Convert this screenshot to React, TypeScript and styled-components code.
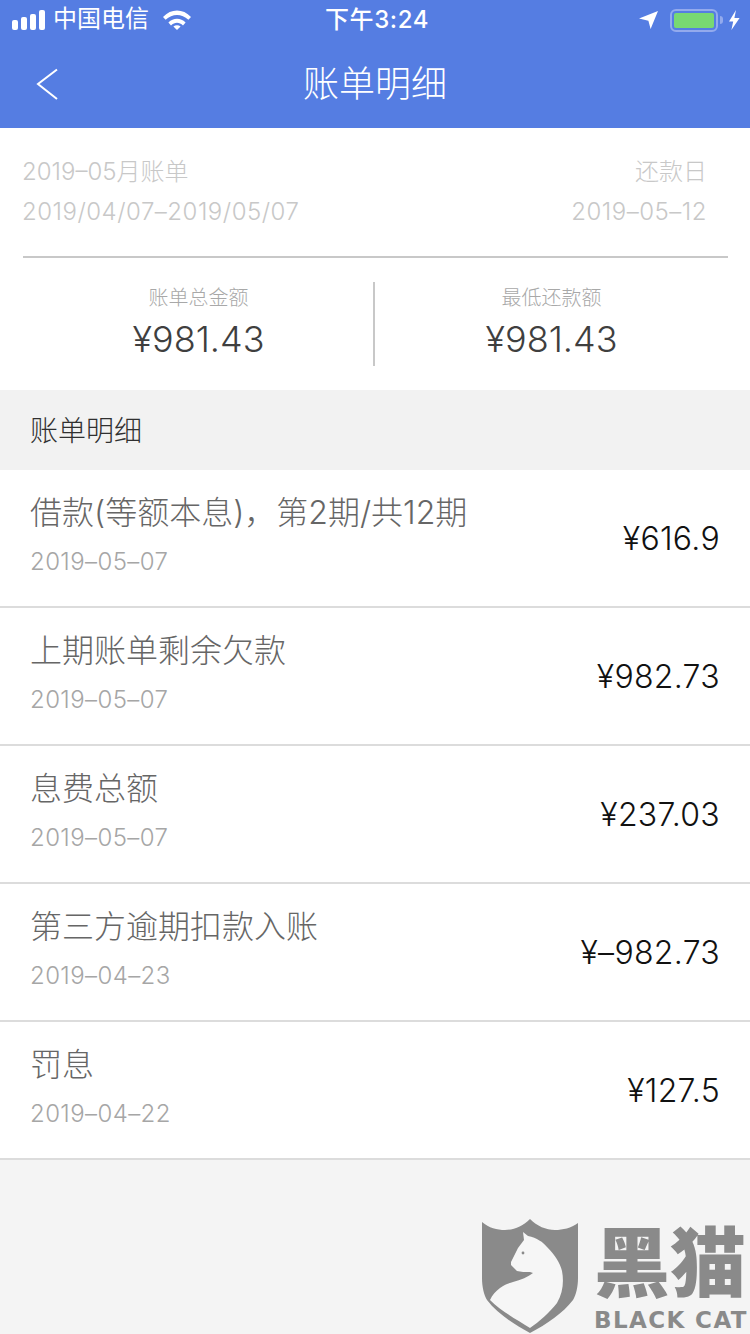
import styled, { createGlobalStyle } from "styled-components";

const GlobalStyle = createGlobalStyle`
  html, body {
    margin: 0;
    padding: 0;
    background: #f4f4f4;
  }
  * {
    box-sizing: border-box;
  }
`;

const fontStack = `Inter, "Noto Sans CJK SC", sans-serif`;

const bills = [
  { title: "借款(等额本息)，第2期/共12期", date: "2019–05–07", amount: "¥616.9" },
  { title: "上期账单剩余欠款", date: "2019–05–07", amount: "¥982.73" },
  { title: "息费总额", date: "2019–05–07", amount: "¥237.03" },
  { title: "第三方逾期扣款入账", date: "2019–04–23", amount: "¥–982.73" },
  { title: "罚息", date: "2019–04–22", amount: "¥127.5" },
];

const App = () => {
  return (
    <>
      <GlobalStyle />
      <Page>
        <Header>
          <StatusBar>
            <StatusLeft>
              <Signal>
                <SignalBar $height={10} />
                <SignalBar $height={13} />
                <SignalBar $height={16} />
                <SignalBar $height={20} />
              </Signal>
              <Carrier>中国电信</Carrier>
              <svg width="28" height="20" viewBox="0 0 28 20">
                <path d="M0 7C8 -1.6 20 -1.6 28 7L25.4 9.8C18.6 3.4 9.4 3.4 2.6 9.8Z" fill="#fff" />
                <path d="M5.4 12.6C10.4 7.6 17.6 7.6 22.6 12.6L20 15.4C16.4 12 11.6 12 8 15.4Z" fill="#fff" />
                <path d="M10.4 16.6C12.6 14.8 15.4 14.8 17.6 16.6L14 20Z" fill="#fff" />
              </svg>
            </StatusLeft>
            <Clock>下午3:24</Clock>
            <StatusRight>
              <svg width="19" height="18" viewBox="0 0 19 18">
                <path d="M19 0L11.6 18L9.4 9.8L0 7.4Z" fill="#fff" />
              </svg>
              <Battery>
                <BatteryFill />
              </Battery>
              <BatteryCap />
              <svg width="12" height="20" viewBox="0 0 12 20">
                <path d="M8 0L1 11.5H5.2L3.4 20L11.6 8H6.4Z" fill="#fff" />
              </svg>
            </StatusRight>
          </StatusBar>
          <NavBar>
            <BackIcon width="24" height="32" viewBox="0 0 24 32">
              <path d="M21 1.5L2 16L21 31" fill="none" stroke="#fff" strokeWidth="2" />
            </BackIcon>
            <NavTitle>账单明细</NavTitle>
          </NavBar>
        </Header>

        <Summary>
          <PeriodRow>
            <PeriodText>2019–05月账单</PeriodText>
            <PeriodText>还款日</PeriodText>
          </PeriodRow>
          <PeriodRow>
            <PeriodDate>2019/04/07–2019/05/07</PeriodDate>
            <PeriodDate>2019–05–12</PeriodDate>
          </PeriodRow>
          <Stats>
            <Stat>
              <StatLabel>账单总金额</StatLabel>
              <StatValue>¥981.43</StatValue>
            </Stat>
            <Stat $divided>
              <StatLabel>最低还款额</StatLabel>
              <StatValue>¥981.43</StatValue>
            </Stat>
          </Stats>
        </Summary>

        <SectionTitle>账单明细</SectionTitle>

        <BillList>
          {bills.map((bill) => (
            <BillRow key={bill.title}>
              <div>
                <BillTitle>{bill.title}</BillTitle>
                <BillDate>{bill.date}</BillDate>
              </div>
              <BillAmount>{bill.amount}</BillAmount>
            </BillRow>
          ))}
        </BillList>

        <Watermark>
          <svg width="98" height="115" viewBox="0 0 98 115">
            <path
              d="M1 3C8 9 16 11 24 11C33 11 42 7 49 0C56 7 65 11 74 11C82 11 90 9 97 4V59C97 68 95 76 92 81C82 94 66 105 49 114C32 105 16 94 6 81C3 76 1 68 1 59Z"
              fill="#8a8a8a"
            />
            <path
              d="M42 13L47 17C56 19 62 23 66 28C74 36 79 44 81 52C83 62 82 74 76 84C68 94 58 103 49 109C36 101 20 92 9 81C11 76 15 72 19 69C24 65 29 64 32 63C40 61 47 58 52 54L49 53C44 53 40 53 36 52L30 46V43L37 29L43 21Z"
              fill="#f6f6f6"
            />
            <circle cx="42" cy="34" r="1.4" fill="#8a8a8a" />
          </svg>
          <Brand>
            <BrandName>黑猫</BrandName>
            <BrandLatin>BLACK CAT</BrandLatin>
          </Brand>
        </Watermark>
      </Page>
    </>
  );
};

export default App;

const Page = styled.div`
  position: relative;
  width: 750px;
  height: 1334px;
  overflow: hidden;
  background: #f4f4f4;
  font-family: ${fontStack};
`;

const Header = styled.header`
  height: 128px;
  background: #557de2;
  color: #fff;
`;

const StatusBar = styled.div`
  height: 40px;
  padding: 0 10px 0 12px;
  display: grid;
  grid-template-columns: 1fr auto 1fr;
  align-items: center;
`;

const StatusLeft = styled.div`
  display: flex;
  align-items: center;
  gap: 8px;
`;

const StatusRight = styled.div`
  display: flex;
  align-items: center;
  justify-content: flex-end;
`;

const Signal = styled.div`
  display: flex;
  align-items: flex-end;
  gap: 3px;
`;

const SignalBar = styled.i<{ $height: number }>`
  display: block;
  width: 6px;
  height: ${(props) => props.$height}px;
  border-radius: 2px;
  background: #fff;
`;

const Carrier = styled.span`
  font-size: 24px;
  line-height: 40px;
  margin: -2px 6px 0 0;
`;

const Clock = styled.span`
  padding-left: 2px;
  font-size: 24px;
  line-height: 40px;
  font-weight: 500;
  letter-spacing: 0.6px;
`;

const Battery = styled.div`
  width: 48px;
  height: 23px;
  margin-left: 12px;
  padding: 2px;
  border: 2px solid #93aaed;
  border-radius: 6px;
`;

const BatteryFill = styled.div`
  height: 100%;
  background: #78d872;
  border-radius: 2px;
`;

const BatteryCap = styled.div`
  width: 3px;
  height: 8px;
  margin: 0 5px 0 2px;
  background: #93aaed;
  border-radius: 0 3px 3px 0;
`;

const NavBar = styled.div`
  position: relative;
  height: 88px;
  display: flex;
  align-items: center;
  justify-content: center;
`;

const BackIcon = styled.svg`
  position: absolute;
  left: 36px;
  top: 28px;
`;

const NavTitle = styled.h1`
  margin: 0;
  font-size: 36px;
  font-weight: 300;
  line-height: 1;
`;

const Summary = styled.section`
  height: 262px;
  padding: 24px 22px 0 22px;
  background: #fff;
`;

const PeriodRow = styled.div`
  height: 40px;
  padding-right: 21px;
  display: flex;
  justify-content: space-between;
  align-items: center;
`;

const PeriodText = styled.span`
  font-size: 24px;
  line-height: 40px;
  font-weight: 300;
  color: #c8c8c8;
`;

const PeriodDate = styled(PeriodText)`
  letter-spacing: 0.5px;
`;

const Stats = styled.div`
  margin: 24px 0 0 1px;
  padding-top: 24px;
  border-top: 2px solid #c8c8c8;
  display: grid;
  grid-template-columns: 351px 1fr;
`;

const Stat = styled.div<{ $divided?: boolean }>`
  height: 84px;
  text-align: center;
  margin-left: ${(props) => (props.$divided ? "-1px" : "0")};
  border-left: ${(props) => (props.$divided ? "2px solid #c8c8c8" : "none")};
`;

const StatLabel = styled.div`
  margin-top: 4px;
  font-size: 20px;
  line-height: 24px;
  font-weight: 300;
  color: #a8a8a8;
`;

const StatValue = styled.div`
  margin-top: 7px;
  font-size: 36px;
  line-height: 44px;
  font-weight: 300;
  color: #3f3f3f;
`;

const SectionTitle = styled.h2`
  height: 80px;
  margin: 0;
  padding-left: 30px;
  background: #f2f2f2;
  font-size: 28px;
  font-weight: 300;
  line-height: 82px;
  color: #303030;
`;

const BillList = styled.div`
  background: #fff;
`;

const BillRow = styled.div`
  height: 138px;
  padding: 23px 30px 0;
  display: flex;
  justify-content: space-between;
  border-bottom: 2px solid #dcdcdc;
`;

const BillTitle = styled.div`
  font-size: 32px;
  line-height: 40px;
  font-weight: 300;
  color: #666;
`;

const BillDate = styled.div`
  margin-top: 13px;
  font-size: 24px;
  line-height: 32px;
  font-weight: 300;
  letter-spacing: 0.4px;
  color: #a6a6a6;
`;

const BillAmount = styled.div`
  margin-top: 26px;
  font-size: 32px;
  line-height: 40px;
  font-weight: 300;
  letter-spacing: 0.3px;
  color: #111;
`;

const Watermark = styled.div`
  position: absolute;
  left: 481px;
  top: 1219px;
  display: flex;
  gap: 15px;
`;

const Brand = styled.div`
  display: flex;
  flex-direction: column;
  color: #8a8a8a;
`;

const BrandName = styled.div`
  margin-top: 8px;
  font-family: "Liberation Sans", "Noto Sans CJK SC", sans-serif;
  font-size: 76px;
  line-height: 76px;
  font-weight: 900;
  white-space: nowrap;
`;

const BrandLatin = styled.div`
  margin-top: 3px;
  font-family: "DejaVu Sans", sans-serif;
  font-size: 23px;
  line-height: 28px;
  font-weight: 700;
  letter-spacing: 1.4px;
  white-space: nowrap;
`;
